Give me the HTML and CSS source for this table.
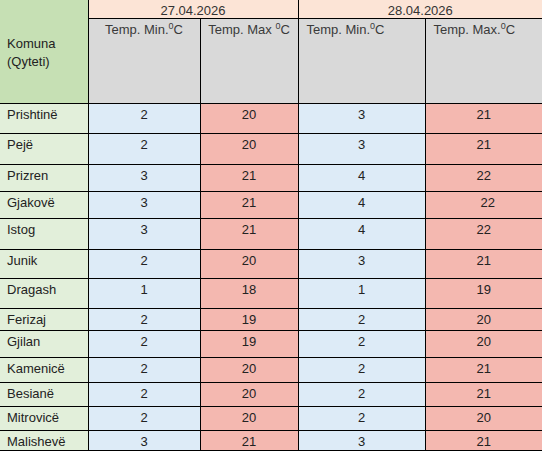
FILE: index.html
```html
<!DOCTYPE html>
<html lang="sq">
<head>
<meta charset="utf-8">
<title>Temperaturat</title>
<link rel="stylesheet" href="styles.css">
</head>
<body>
<table class="temps">
  <colgroup>
    <col class="c-city">
    <col class="c-min1">
    <col class="c-max1">
    <col class="c-min2">
    <col class="c-max2">
  </colgroup>
  <thead>
    <tr class="r-date">
      <th rowspan="2" class="city-head">Komuna<br>(Qyteti)</th>
      <th colspan="2" class="date">27.04.2026</th>
      <th colspan="2" class="date">28.04.2026</th>
    </tr>
    <tr class="r-sub">
      <th class="sub center">Temp. Min.<sup>0</sup>C</th>
      <th class="sub center">Temp. Max <sup>0</sup>C</th>
      <th class="sub left">Temp. Min.<sup>0</sup>C</th>
      <th class="sub left">Temp. Max.<sup>0</sup>C</th>
    </tr>
  </thead>
  <tbody>
    <tr class="h30"><td class="city">Prishtinë</td><td class="min">2</td><td class="max">20</td><td class="min">3</td><td class="max">21</td></tr>
    <tr class="h31"><td class="city">Pejë</td><td class="min">2</td><td class="max">20</td><td class="min">3</td><td class="max">21</td></tr>
    <tr class="h27"><td class="city">Prizren</td><td class="min">3</td><td class="max">21</td><td class="min">4</td><td class="max">22</td></tr>
    <tr class="h27"><td class="city">Gjakovë</td><td class="min">3</td><td class="max">21</td><td class="min">4</td><td class="max shift">22</td></tr>
    <tr class="h31"><td class="city">Istog</td><td class="min">3</td><td class="max">21</td><td class="min">4</td><td class="max">22</td></tr>
    <tr class="h29"><td class="city">Junik</td><td class="min">2</td><td class="max">20</td><td class="min">3</td><td class="max">21</td></tr>
    <tr class="h30"><td class="city">Dragash</td><td class="min">1</td><td class="max">18</td><td class="min">1</td><td class="max">19</td></tr>
    <tr class="h22"><td class="city">Ferizaj</td><td class="min">2</td><td class="max">19</td><td class="min">2</td><td class="max">20</td></tr>
    <tr class="h27"><td class="city">Gjilan</td><td class="min">2</td><td class="max">19</td><td class="min">2</td><td class="max">20</td></tr>
    <tr class="h25"><td class="city">Kamenicë</td><td class="min">2</td><td class="max">20</td><td class="min">2</td><td class="max">21</td></tr>
    <tr class="h24"><td class="city">Besianë</td><td class="min">2</td><td class="max">20</td><td class="min">2</td><td class="max">21</td></tr>
    <tr class="h24"><td class="city">Mitrovicë</td><td class="min">2</td><td class="max">20</td><td class="min">2</td><td class="max">20</td></tr>
    <tr class="h20"><td class="city">Malishevë</td><td class="min">3</td><td class="max">21</td><td class="min">3</td><td class="max">21</td></tr>
  </tbody>
</table>
</body>
</html>
```

FILE: styles.css
```css
html, body {
  margin: 0;
  padding: 0;
  background: #ffffff;
}

.temps {
  border-collapse: collapse;
  table-layout: fixed;
  width: 542px;
  font-family: "Liberation Sans", Arial, sans-serif;
  font-size: 13px;
  line-height: 15px;
  color: #222222;
}

.c-city { width: 88px; }
.c-min1 { width: 112px; }
.c-max1 { width: 98px; }
.c-min2 { width: 127px; }
.c-max2 { width: 117px; }

.temps th,
.temps td {
  border: 1px solid #000000;
  padding: 0;
  font-weight: normal;
}

.temps tr > :first-child { border-left: none; }
.temps tr > :last-child { border-right: none; }
.temps thead tr:first-child > * { border-top: none; }

.r-date { height: 18px; }
.r-sub { height: 85px; }

.temps th.city-head {
  background: #c6e0b4;
  text-align: left;
  vertical-align: middle;
  padding: 3px 0 0 7px;
  line-height: 18px;
  color: #222222;
}

.temps th.date {
  background: #fce4d6;
  text-align: center;
  vertical-align: bottom;
  color: #333333;
}

.temps th.sub {
  background: #d9d9d9;
  vertical-align: top;
  padding-top: 3px;
  color: #3a3a3a;
}
.temps th.center { text-align: center; }
.temps th.left { text-align: left; padding-left: 8px; }

.sub sup {
  font-size: 9px;
  line-height: 0;
  vertical-align: 5px;
}

.temps td {
  vertical-align: top;
  padding-top: 3px;
}

.temps td.city {
  background: #e2efda;
  text-align: left;
  padding-left: 7px;
}

.temps td.min {
  background: #ddebf7;
  text-align: center;
}

.temps td.max {
  background: #f4b8b0;
  text-align: center;
}

.temps td.shift { padding-left: 8px; }

.h20 { height: 20px; }
.h22 { height: 22px; }
.h24 { height: 24px; }
.h25 { height: 25px; }
.h27 { height: 27px; }
.h29 { height: 29px; }
.h30 { height: 30px; }
.h31 { height: 31px; }
```
